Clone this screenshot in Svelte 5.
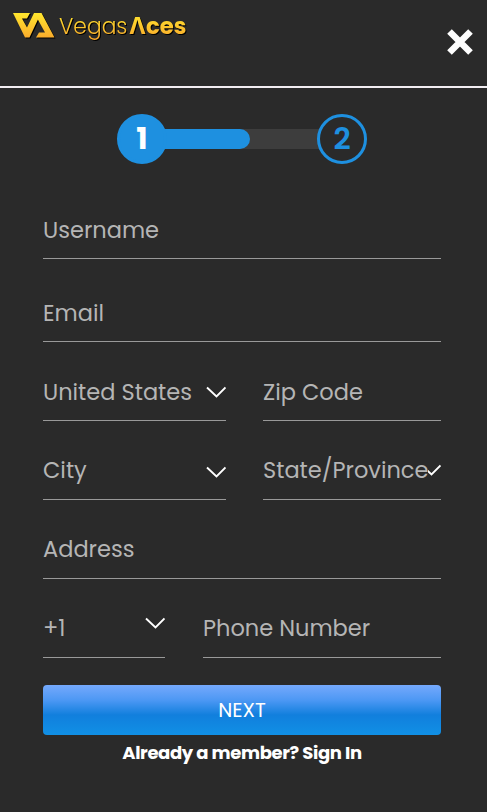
<script lang="ts">
    type Field = {
        label: string;
        name: string;
        select?: boolean;
    };

    const rows: { kind: string; fields: Field[] }[] = [
        { kind: "first", fields: [{ label: "Username", name: "username" }] },
        { kind: "second", fields: [{ label: "Email", name: "email" }] },
        {
            kind: "halves",
            fields: [
                { label: "United States", name: "country", select: true },
                { label: "Zip Code", name: "zip" },
            ],
        },
        {
            kind: "halves low",
            fields: [
                { label: "City", name: "city", select: true },
                { label: "State/Province", name: "state", select: true },
            ],
        },
        { kind: "low", fields: [{ label: "Address", name: "address" }] },
        {
            kind: "phone low",
            fields: [
                { label: "+1", name: "prefix", select: true },
                { label: "Phone Number", name: "number" },
            ],
        },
    ];
</script>

<div class="signup">
    <header>
        <svg class="logo" viewBox="0 0 190 48" aria-label="VegasAces">
            <defs>
                <linearGradient id="gold" x1="0" y1="12" x2="0" y2="40" gradientUnits="userSpaceOnUse">
                    <stop offset="0" stop-color="#ffe92e" />
                    <stop offset="1" stop-color="#f9a62c" />
                </linearGradient>
            </defs>
            <g class="mark" fill="url(#gold)">
                <path d="M13 13H30L27 18.500H22L27 27.500L34 13H41L29.500 37.500H25Z" />
                <path d="M36 13H41.500L54.500 37.500H36L39 32.500H45L37 18Z" />
            </g>
            <g class="mark" fill="url(#gold)">
                <text class="vegas" x="59" y="34" textLength="68.500" lengthAdjust="spacingAndGlyphs">Vegas</text>
                <text class="aces" x="129" y="34" textLength="57.500" lengthAdjust="spacingAndGlyphs">Λces</text>
            </g>
        </svg>
        <button class="close" aria-label="Close">
            <svg viewBox="0 0 26 26"><path d="M2.500 2.500L23.500 23.500M23.500 2.500L2.500 23.500" /></svg>
        </button>
    </header>

    <div class="steps">
        <div class="step active">1</div>
        <div class="track"><div class="fill"></div></div>
        <div class="step">2</div>
    </div>

    <form>
        {#each rows as row}
            <div class="row {row.kind}">
                {#each row.fields as field}
                    <div class="field {field.name}">
                        <span class="label">{field.label}</span>
                        {#if field.select}
                            <svg class="chevron" viewBox="0 0 20 12"><path d="M1 1.500L10.500 10.500L19.500 1.500" /></svg>
                        {/if}
                    </div>
                {/each}
            </div>
        {/each}
        <button class="next" type="button"><span>NEXT</span></button>
    </form>

    <div class="member"><span>Already a member? Sign In</span></div>
</div>

<style>
    :global(body) {
        background: #2a2a2a;
    }

    .signup {
        height: 812px;
        box-sizing: border-box;
        overflow: hidden;
        background: #2a2a2a;
        font-family: Poppins, Inter, sans-serif;
    }

    header {
        display: flex;
        justify-content: space-between;
        height: 86px;
        border-bottom: 2px solid #f1edf1;
    }

    .logo {
        width: 190px;
        height: 48px;
    }

    .mark {
        filter: drop-shadow(1px 1px 0.5px #000);
    }

    .vegas {
        font-size: 24px;
        font-weight: 300;
    }

    .aces {
        font-size: 23px;
        font-weight: 700;
    }

    button {
        border: 0;
        padding: 0;
        font-family: inherit;
    }

    .close {
        width: 26px;
        height: 26px;
        margin: 29px 14px 0 0;
        background: none;
    }

    .close svg {
        display: block;
        overflow: visible;
    }

    .close path {
        fill: none;
        stroke: #fff;
        stroke-width: 6.5;
    }

    .steps {
        display: flex;
        align-items: center;
        width: 250px;
        margin: 26px 0 0 117px;
    }

    .step {
        box-sizing: border-box;
        width: 50px;
        height: 50px;
        border: 3px solid #1e90e0;
        border-radius: 50%;
        color: #1e90e0;
        font-size: 30px;
        font-weight: 600;
        line-height: 44px;
        text-align: center;
        z-index: 1;
    }

    .step.active {
        background: #1e90e0;
        color: #fff;
        font-weight: 700;
    }

    .track {
        flex: 1;
        height: 20px;
        margin: 0 -2px 0 -6px;
        background: #3d3d3d;
    }

    .fill {
        width: 89px;
        height: 20px;
        border-radius: 0 10px 10px 0;
        background: #1e90e0;
    }

    form {
        width: 398px;
        margin: 45px 0 0 43px;
    }

    .row {
        display: grid;
        height: 79px;
    }

    .first {
        height: 50px;
    }

    .second {
        height: 83px;
    }

    .halves {
        grid-template-columns: 183px 178px;
        column-gap: 37px;
    }

    .phone {
        grid-template-columns: 122px 238px;
        column-gap: 38px;
    }

    .field {
        display: flex;
        align-items: flex-end;
        justify-content: space-between;
        min-width: 0;
        box-sizing: border-box;
        border-bottom: 1px solid #999;
        padding-bottom: 12px;
    }

    .low .field {
        padding-bottom: 13px;
    }

    .label {
        color: #b5b5b5;
        font-size: 22.5px;
        line-height: 32px;
        white-space: nowrap;
    }

    .chevron {
        flex: none;
        width: 20px;
        height: 12px;
        margin-bottom: 10px;
    }

    .city .chevron {
        margin-bottom: 8px;
    }

    .state .chevron {
        margin: 0 0 10px -20px;
    }

    /* long label covers the left half of its arrow */
    .state .label {
        background: #2a2a2a;
        z-index: 1;
    }

    .prefix .chevron {
        margin-bottom: 15px;
    }

    .chevron path {
        fill: none;
        stroke: #fff;
        stroke-width: 1.9;
    }

    .next {
        display: block;
        width: 100%;
        height: 50px;
        margin-top: 27px;
        border-radius: 4px;
        background: linear-gradient(#75a9fc 0%, #4d98f4 30%, #117fdd 60%, #1190e5 100%);
        color: #fff;
        font-size: 20px;
        font-weight: 400;
        line-height: 51px;
    }

    .member {
        color: #fff;
        font-size: 18px;
        font-weight: 700;
        letter-spacing: -0.37px;
        line-height: 36px;
        text-align: center;
        width: 484px;
    }
</style>
